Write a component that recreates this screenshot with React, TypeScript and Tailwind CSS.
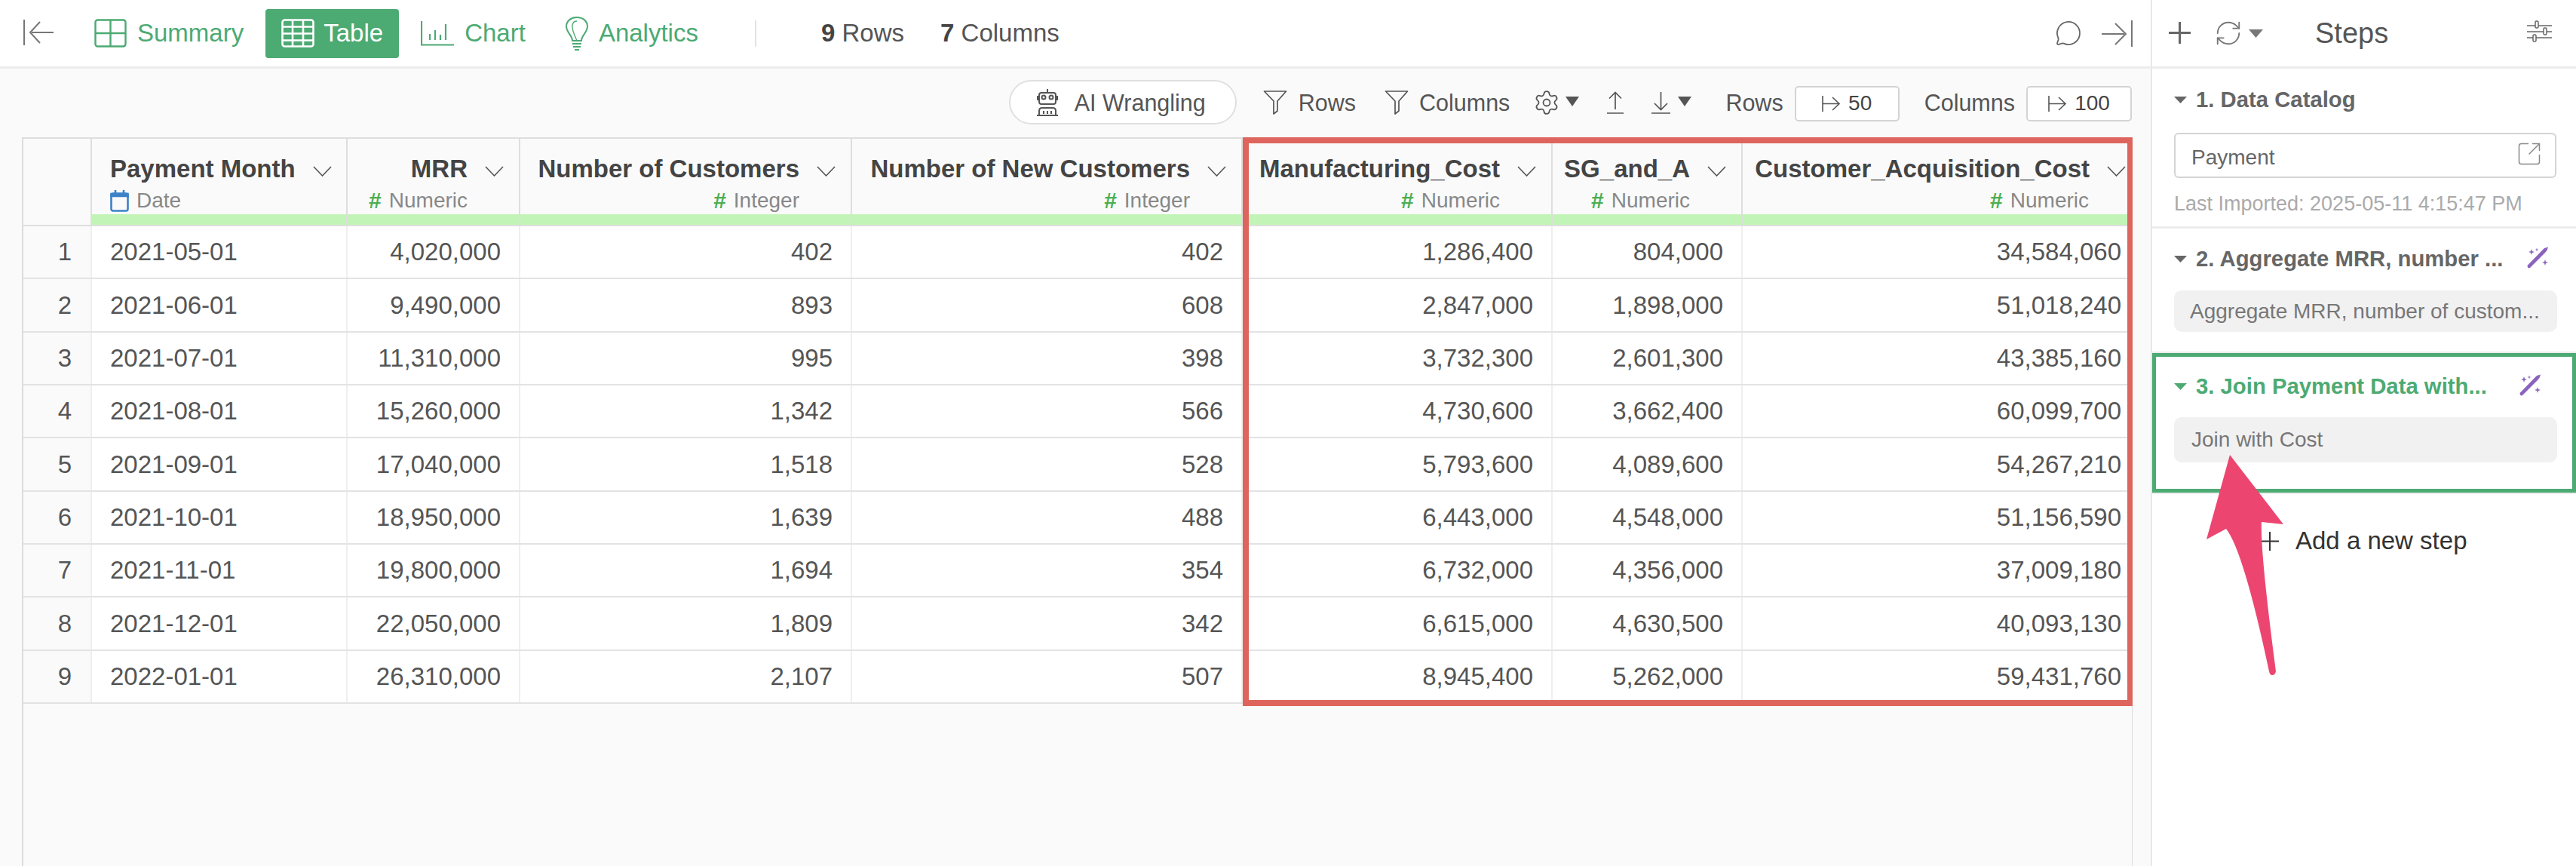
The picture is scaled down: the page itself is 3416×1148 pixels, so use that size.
import React from 'react';
import { Settings, MessageCircle, RefreshCw, SquareArrowOutUpRight } from 'lucide-react';

const rows = [
  ['2021-05-01', '4,020,000', '402', '402', '1,286,400', '804,000', '34,584,060'],
  ['2021-06-01', '9,490,000', '893', '608', '2,847,000', '1,898,000', '51,018,240'],
  ['2021-07-01', '11,310,000', '995', '398', '3,732,300', '2,601,300', '43,385,160'],
  ['2021-08-01', '15,260,000', '1,342', '566', '4,730,600', '3,662,400', '60,099,700'],
  ['2021-09-01', '17,040,000', '1,518', '528', '5,793,600', '4,089,600', '54,267,210'],
  ['2021-10-01', '18,950,000', '1,639', '488', '6,443,000', '4,548,000', '51,156,590'],
  ['2021-11-01', '19,800,000', '1,694', '354', '6,732,000', '4,356,000', '37,009,180'],
  ['2021-12-01', '22,050,000', '1,809', '342', '6,615,000', '4,630,500', '40,093,130'],
  ['2022-01-01', '26,310,000', '2,107', '507', '8,945,400', '5,262,000', '59,431,760'],
];

const columns = [
  { name: 'Payment Month', type: 'Date' },
  { name: 'MRR', type: 'Numeric' },
  { name: 'Number of Customers', type: 'Integer' },
  { name: 'Number of New Customers', type: 'Integer' },
  { name: 'Manufacturing_Cost', type: 'Numeric' },
  { name: 'SG_and_A', type: 'Numeric' },
  { name: 'Customer_Acquisition_Cost', type: 'Numeric' },
];

const gridCols = 'grid grid-cols-[91px_339px_229px_440px_518px_411px_252px_516px]';

function Chevron() {
  return (
    <svg width="25" height="14" viewBox="0 0 25 14" className="ml-[23px] mt-[5px] shrink-0" fill="none" stroke="#555" strokeWidth="1.6">
      <path d="M1 1 L12.5 13 L24 1" />
    </svg>
  );
}

function Caret({ color = '#555', w = 18, h = 10 }: { color?: string; w?: number; h?: number }) {
  return (
    <svg width={w} height={h} viewBox="0 0 18 10" preserveAspectRatio="none" className="shrink-0">
      <path d="M0 0 H18 L9 10 Z" fill={color} />
    </svg>
  );
}

function Wand() {
  return (
    <svg width="29" height="29" viewBox="0 0 29 29" fill="#8B63BE">
      <path d="M0.5 25 L20 5 L23 2 L28 0.5 L26.5 5 L23.5 8.5 L4 28 Q2.5 29 1 27.5 Z" />
      <path d="M6 3 L7 6 L10 7 L7 8 L6 11 L5 8 L2 7 L5 6 Z" />
      <path d="M13 1.5 L13.6 3.4 L15.5 4 L13.6 4.6 L13 6.5 L12.4 4.6 L10.5 4 L12.4 3.4 Z" />
      <path d="M24 17 L25 20 L28 21 L25 22 L24 25 L23 22 L20 21 L23 20 Z" />
    </svg>
  );
}

function ToRight() {
  return (
    <svg width="25" height="21" viewBox="0 0 25 21" fill="none" stroke="#555" strokeWidth="1.6">
      <path d="M1 0 V21 M1 10.5 H23 M14 2 L23 10.5 L14 19" />
    </svg>
  );
}

function Funnel() {
  return (
    <svg width="32" height="32" viewBox="0 0 32 32" fill="none" stroke="#555" strokeWidth="1.7">
      <path d="M1.5 1 H30.5 L19 14 V27 L14 31 V14 Z" strokeLinejoin="round" />
    </svg>
  );
}

function RowStat({ n, label }: { n: string; label: string }) {
  return (
    <span className="text-[33px] leading-none text-[#555]">
      <b className="text-[#444]">{n}</b> {label}
    </span>
  );
}

function TopBar() {
  return (
    <div className="h-[91px] border-b-[3px] border-[#ececec] bg-white flex items-center pl-[31px] text-[33px] text-[#4CAA73]">
      <svg width="41" height="34" viewBox="0 0 41 34" fill="none" stroke="#777" strokeWidth="2" className="-mt-[2px]">
        <path d="M1 0 V34 M40 17 H11 M22 3 L9 17 L22 31" />
      </svg>
      <svg width="43" height="38" viewBox="0 0 43 38" fill="none" stroke="#4CAA73" strokeWidth="2.4" className="ml-[53px]">
        <rect x="1.5" y="1.5" width="40" height="35" rx="3" />
        <path d="M21.5 1.5 V36.5 M1.5 19 H41.5" />
      </svg>
      <span className="ml-[14px]">Summary</span>
      <div className="ml-[29px] w-[177px] h-[65px] rounded-[4px] bg-[#4CAA73] text-white flex items-center pl-[21px]">
        <svg width="44" height="38" viewBox="0 0 44 38" fill="none" stroke="#fff" strokeWidth="2.6">
          <rect x="1.5" y="1.5" width="41" height="35" rx="3" />
          <path d="M15 1.5 V36.5 M29 1.5 V36.5 M1.5 10.5 H42.5 M1.5 19.5 H42.5 M1.5 28.5 H42.5" />
        </svg>
        <span className="ml-[12px]">Table</span>
      </div>
      <svg width="44" height="33" viewBox="0 0 44 33" fill="none" stroke="#4CAA73" strokeWidth="2.2" className="ml-[29px]">
        <path d="M1 0 V31.5 H44 M12 17 V25 M19 12 V25 M26 18 V25 M33 4 V25" />
      </svg>
      <span className="ml-[14px]">Chart</span>
      <svg width="30" height="45" viewBox="0 0 30 45" fill="none" stroke="#4CAA73" strokeWidth="2" className="ml-[53px]">
        <path d="M9 32 C9 25 1 21 1 13 C1 6 7 1 15 1 C23 1 29 6 29 13 C29 21 21 25 21 32 Z M9 36 H21 M10 40 H20 M12 44 H18" />
        <path d="M15 32 C12 24 8 18 9 11 C10 7 13 6 15 6" strokeWidth="1.4" />
      </svg>
      <span className="ml-[14px]">Analytics</span>
      <div className="ml-[75px] w-[2px] h-[35px] bg-[#e2e2e2]" />
      <div className="ml-[86px]"><RowStat n="9" label="Rows" /></div>
      <div className="ml-[48px]"><RowStat n="7" label="Columns" /></div>
      <MessageCircle className="ml-auto w-[36px] h-[36px] text-[#666]" strokeWidth={1.2} />
      <div className="ml-[26px] mr-[24px]">
        <svg width="41" height="35" viewBox="0 0 41 35" fill="none" stroke="#777" strokeWidth="2">
          <path d="M40 0 V35 M0 18 H30 M18 4 L32 18 L18 32" />
        </svg>
      </div>
    </div>
  );
}

function Toolbar() {
  return (
    <div className="h-[91px] flex items-center justify-end pr-[25px] pb-[2px] text-[#555] text-[30.5px]">
      <div className="w-[302px] h-[59px] rounded-full border-2 border-[#e0e0e0] bg-white flex items-center pl-[33px]">
        <svg width="32" height="36" viewBox="0 0 32 36" fill="none" stroke="#555" strokeWidth="2">
          <path d="M16 0 V5 M8 5 H24 Q27 5 27 8 V17 Q27 20 24 20 H8 Q5 20 5 17 V8 Q5 5 8 5 Z M3 9 V15 M29 9 V15 M12 25 H20" />
          <circle cx="11" cy="11" r="2.5" />
          <circle cx="21" cy="11" r="2.5" />
          <path d="M5 35 V29 Q5 25 9 25 H23 Q27 25 27 29 V35 Z M2 35 H30 M11 29 V33 M16 29 V33 M21 29 V33" />
        </svg>
        <span className="ml-[20px] mt-[3px]">AI Wrangling</span>
      </div>
      <div className="ml-[35px]"><Funnel /></div>
      <span className="ml-[15px] mt-[3px]">Rows</span>
      <div className="ml-[38px]"><Funnel /></div>
      <span className="ml-[14px] mt-[3px]">Columns</span>
      <Settings className="ml-[31px] w-[36px] h-[36px]" strokeWidth={1.2} />
      <div className="ml-[7px] -mt-[3px]"><Caret w={18} h={13} /></div>
      <svg width="22" height="30" viewBox="0 0 22 30" fill="none" stroke="#555" strokeWidth="1.7" className="ml-[37px]">
        <path d="M11 24 V2 M3 9.5 L11 1.5 L19 9.5 M0 29 H22" />
      </svg>
      <svg width="25" height="30" viewBox="0 0 25 30" fill="none" stroke="#555" strokeWidth="1.7" className="ml-[37px]">
        <path d="M12.5 1 V24 M4 16 L12.5 24.5 L21 16 M0 29 H25" />
      </svg>
      <div className="ml-[10px] -mt-[3px]"><Caret w={18} h={13} /></div>
      <span className="ml-[45px] mt-[3px]">Rows</span>
      <div className="ml-[15px] mt-[3px] w-[139px] h-[47px] rounded-[5px] border-2 border-[#d4d4d4] bg-white flex items-center justify-center gap-[10px] text-[#444] text-[28px]">
        <ToRight />
        <span>50</span>
      </div>
      <span className="ml-[33px] mt-[3px]">Columns</span>
      <div className="ml-[15px] mt-[3px] w-[140px] h-[47px] rounded-[5px] border-2 border-[#d4d4d4] bg-white flex items-center justify-center gap-[10px] text-[#444] text-[28px]">
        <ToRight />
        <span>100</span>
      </div>
    </div>
  );
}

function TypeIcon({ type }: { type: string }) {
  if (type === 'Date') {
    return (
      <svg width="25" height="29" viewBox="0 0 25 29" fill="none" stroke="#3B82C8" strokeWidth="2.6" className="mr-[10px]">
        <rect x="1.5" y="4.5" width="22" height="23" rx="2.5" />
        <path d="M1.5 5 H23.5 V8 H1.5 Z M7 0 V5 M18 0 V5" fill="#3B82C8" />
      </svg>
    );
  }
  return <span className="mr-[10px] font-bold text-[#4CAF50] text-[30px] leading-none">#</span>;
}

function HeaderCell({ name, type, idx }: { name: string; type: string; idx: number }) {
  const left = idx === 0;
  const last = idx === 6;
  return (
    <div className="border-r-2 border-[#dedede]">
      <div className="h-[100px] pt-[20px]">
        <div className={`flex items-center h-[40px] text-[33px] font-bold text-[#444] whitespace-nowrap ${left ? 'pl-[24px]' : last ? 'justify-end pr-[6px]' : 'justify-end pr-[20px]'}`}>
          <span>{name}</span>
          <Chevron />
        </div>
        <div className={`flex items-center h-[32px] mt-[6px] text-[28px] text-[#888] ${left ? 'pl-[24px]' : last ? 'justify-end pr-[55px]' : 'justify-end pr-[68px]'}`}>
          <TypeIcon type={type} />
          <span>{type}</span>
        </div>
      </div>
      <div className="h-[14px] bg-[#C3F4B7]" />
    </div>
  );
}

function DataTable() {
  return (
    <div className="ml-[29px] w-[2799px] flex-1 border-l-2 border-r border-[#dcdcdc] bg-[#fafafa]">
      <div className="border-t-2 border-[#dedede]">
        <div className={`${gridCols} border-b-2 border-[#dedede]`}>
          <div className="border-r-2 border-[#dedede]" />
          {columns.map((c, i) => (
            <HeaderCell key={c.name} name={c.name} type={c.type} idx={i} />
          ))}
        </div>
      </div>
      {rows.map((row, i) => (
        <div key={i} className={`${gridCols} h-[70.33px] border-b-2 border-[#e3e3e3] text-[33px] text-[#555]`}>
          <div className="border-r-2 border-[#efefef] flex items-center justify-end pr-[25px]">{i + 1}</div>
          {row.map((v, j) => (
            <div
              key={j}
              className={`bg-white flex items-center border-r-2 border-[#efefef] ${j === 0 ? 'pl-[24px]' : j === 6 ? 'justify-end pr-[12px]' : 'justify-end pr-[24px]'}`}
            >
              {v}
            </div>
          ))}
        </div>
      ))}
    </div>
  );
}

function StepTitle({ label, green, wandClass }: { label: string; green?: boolean; wandClass?: string }) {
  return (
    <div className={`flex items-center h-[34px] text-[29.3px] font-bold whitespace-nowrap ${green ? 'text-[#4CAA73]' : 'text-[#666]'}`}>
      <Caret color={green ? '#4CAA73' : '#666'} w={17} h={9} />
      <span className="ml-[12px]">{label}</span>
      {wandClass && <div className={wandClass}><Wand /></div>}
    </div>
  );
}

function Sidebar() {
  return (
    <div className="w-[564px] border-l-2 border-[#e8e8e8] bg-white flex flex-col">
      <div className="h-[91px] border-b-[3px] border-[#ececec] flex items-center pl-[22px] text-[#555]">
        <svg width="29" height="29" viewBox="0 0 29 29" stroke="#666" strokeWidth="3" className="-mt-[2px]">
          <path d="M14.5 0 V29 M0 14.5 H29" />
        </svg>
        <RefreshCw className="ml-[31px] w-[38px] h-[38px] text-[#777]" strokeWidth={1.2} />
        <div className="ml-[8px]"><Caret color="#777" w={19} h={11} /></div>
        <span className="ml-[69px] text-[38px]">Steps</span>
        <svg width="33" height="30" viewBox="0 0 33 30" fill="none" stroke="#666" strokeWidth="1.5" className="ml-[184px] -mt-[4px]">
          <path d="M0 7 H33 M0 15 H33 M0 23 H33" />
          <rect x="11" y="1" width="4" height="9" rx="1.5" fill="#fff" />
          <rect x="22" y="10" width="4" height="9" rx="1.5" fill="#fff" />
          <rect x="8" y="19" width="4" height="9" rx="1.5" fill="#fff" />
        </svg>
      </div>

      <div className="h-[212px] border-b-[3px] border-[#ececec] pl-[29px] pt-[24px]">
        <StepTitle label="1. Data Catalog" />
        <div className="mt-[27px] w-[507px] h-[60px] rounded-[6px] border-2 border-[#d4d4d4] flex items-center pl-[21px] pr-[16px] text-[28px] text-[#666]">
          <span className="mt-[6px]">Payment</span>
          <SquareArrowOutUpRight className="ml-auto -mt-[4px] w-[36px] h-[36px] text-[#888]" strokeWidth={1} />
        </div>
        <div className="mt-[18px] text-[27px] leading-[32px] text-[#aaa] whitespace-nowrap">Last Imported: 2025-05-11 4:15:47 PM</div>
      </div>

      <div className="h-[165px] pl-[29px] pt-[23px]">
        <StepTitle label="2. Aggregate MRR, number ..." wandClass="ml-[31px] -mt-[3px]" />
        <div className="mt-[25px] w-[508px] h-[55px] rounded-[10px] bg-[#f1f1f1] flex items-center pl-[21px] text-[28px] text-[#777] whitespace-nowrap">
          Aggregate MRR, number of custom...
        </div>
      </div>

      <div className="h-[185px] border-[5px] border-[#4CAA73] shadow-[0_-2px_0_#ececec,0_2px_0_#ececec] pl-[24px] pt-[22px]">
        <StepTitle label="3. Join Payment Data with..." green wandClass="ml-[43px] -mt-[3px]" />
        <div className="mt-[24px] w-[508px] h-[60px] rounded-[10px] bg-[#f1f1f1] flex items-center pl-[23px] text-[28px] text-[#777]">
          Join with Cost
        </div>
      </div>

      <div className="flex items-center h-[40px] pl-[144px] mt-[44px] text-[33px] text-[#333]">
        <svg width="24" height="25" viewBox="0 0 24 25" stroke="#333" strokeWidth="2">
          <path d="M12 0 V25 M0 12.5 H24" />
        </svg>
        <span className="ml-[22px]">Add a new step</span>
      </div>
    </div>
  );
}

export default function App() {
  return (
    <div className="relative w-[3416px] h-[1148px] overflow-hidden flex bg-[#fafafa] font-['Liberation_Sans',Arial,sans-serif]">
      <div className="w-[2852px] flex flex-col">
        <TopBar />
        <Toolbar />
        <DataTable />
      </div>
      <Sidebar />

      {/* red highlight around the joined columns */}
      <div className="absolute left-[1648px] top-[182px] w-[1180px] h-[754px] border-[8px] border-r-[7px] border-[#DD655D] pointer-events-none" />

      {/* pink annotation arrow */}
      <svg width="115" height="300" viewBox="0 0 115 300" className="absolute left-[2920px] top-[600px]">
        <path
          d="M37 3 L108 95 L79 92 Q77 130 98 290 Q97 295 93 295 Q90 295 89 290 Q55 130 32 101 L6 115 Z"
          fill="#EC4670"
        />
      </svg>
    </div>
  );
}
